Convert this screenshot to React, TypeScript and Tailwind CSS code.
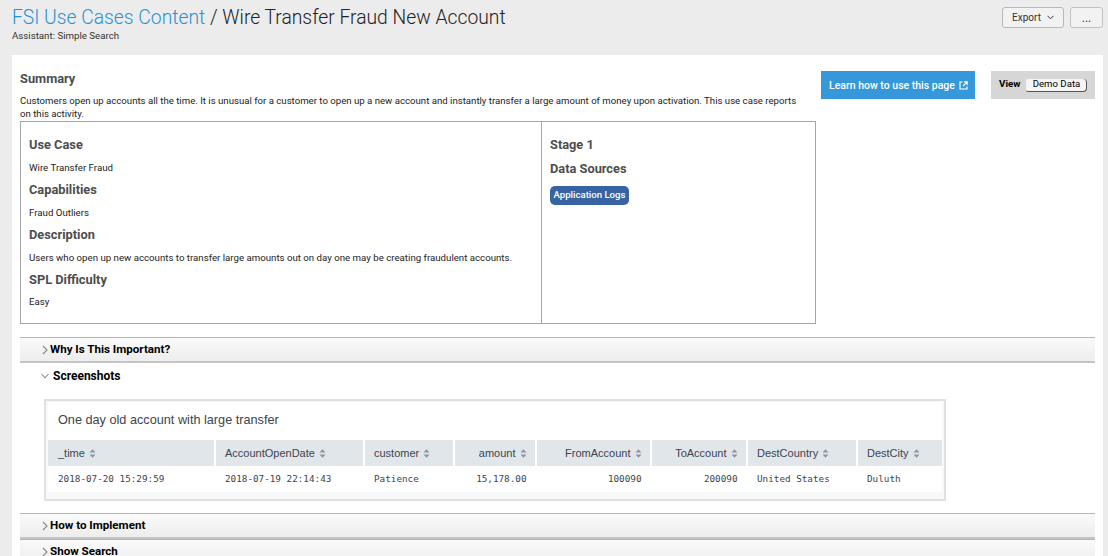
import React from "react";

const Sort = () => (
  <svg width="7" height="9" viewBox="0 0 7 9" className="ml-[4px] shrink-0" fill="#8d96a0">
    <path d="M3.5 0.3 L6.5 3.6 H0.5 Z" />
    <path d="M3.5 8.7 L6.5 5.4 H0.5 Z" />
  </svg>
);

const Chevron = ({ open }: { open?: boolean }) => (
  <svg width="8" height="10" viewBox="0 0 8 10" fill="none" stroke="#888" strokeWidth="1.1" className="shrink-0">
    {open ? <path d="M0.5 3 L4 6.8 L7.5 3" /> : <path d="M2 1 L6 5 L2 9" />}
  </svg>
);

const Bar = ({ title }: { title: string }) => (
  <div className="flex h-[26px] shrink-0 items-center gap-[1px] border-t border-t-[#b5b5b5] border-b-2 border-b-[#c4c4c4] bg-gradient-to-b from-[#fafafa] to-[#ededed] pl-[21px] text-[11.6px] font-bold text-black">
    <Chevron />
    <span>{title}</span>
  </div>
);

const columns: { label: string; w: string; right?: boolean; value: string }[] = [
  { label: "_time", w: "w-[168px]", value: "2018-07-20 15:29:59" },
  { label: "AccountOpenDate", w: "w-[149px]", value: "2018-07-19 22:14:43" },
  { label: "customer", w: "w-[90px]", value: "Patience" },
  { label: "amount", w: "w-[82px]", right: true, value: "15,178.00" },
  { label: "FromAccount", w: "w-[115px]", right: true, value: "100090" },
  { label: "ToAccount", w: "w-[96px]", right: true, value: "200090" },
  { label: "DestCountry", w: "w-[110px]", value: "United States" },
  { label: "DestCity", w: "w-[84px]", value: "Duluth" },
];

const H = ({ children, className = "" }: { children: React.ReactNode; className?: string }) => (
  <h3 className={`text-[12.8px] leading-[18px] font-bold text-[#4d4d4d] ${className}`}>{children}</h3>
);

export default function App() {
  return (
    <div className="h-[556px] w-[1108px] overflow-hidden bg-[#ececec] font-['Roboto',sans-serif] text-black">
      <header className="flex h-[55px] items-start justify-between pl-3 pr-[5px]">
        <div className="pt-[6px]">
          <h1 className="text-[19.3px] leading-6 font-light text-[#222]">
            <a className="text-[#2a91cf]">FSI Use Cases Content</a> / Wire Transfer Fraud New Account
          </h1>
          <p className="text-[9.7px] leading-[12px] text-[#333]">Assistant: Simple Search</p>
        </div>
        <div className="flex gap-[6px] pt-[7px]">
          <button className="flex h-[21px] w-[62px] items-center justify-center gap-[6px] rounded-[3px] border border-[#b8b8b8] bg-[#f2f2f2] text-[10px] text-[#333]">
            Export
            <svg width="7" height="5" viewBox="0 0 7 5" fill="none" stroke="#333" strokeWidth="1">
              <path d="M0.5 0.8 L3.5 3.8 L6.5 0.8" />
            </svg>
          </button>
          <button className="h-[21px] w-[33px] rounded-[3px] border border-[#c2c2c2] bg-[#f2f2f2] text-[12px] text-[#333]">...</button>
        </div>
      </header>

      <main className="ml-3 h-[501px] w-[1091px] bg-white pl-2 pt-4">
        <div className="flex items-start">
          <div className="w-[796px] shrink-0">
            <h2 className="text-[12.8px] leading-4 font-bold text-[#4d4d4d]">Summary</h2>
            <p className="mt-[7px] mb-[1px] pr-[8px] text-[9.65px] leading-[13px] text-[#222]">
              Customers open up accounts all the time. It is unusual for a customer to open up a new account and instantly transfer a large amount of money upon activation. This use case reports on this activity.
            </p>
            <div className="flex h-[203px] border border-[#a6a6a6]">
              <div className="w-[521px] border-r border-[#a6a6a6] pl-2 pt-[14px] text-[9.68px] text-[#222]">
                <H>Use Case</H>
                <p className="mt-[7px] leading-[13px]">Wire Transfer Fraud</p>
                <H className="mt-[7px]">Capabilities</H>
                <p className="mt-[7px] leading-[13px]">Fraud Outliers</p>
                <H className="mt-[7px]">Description</H>
                <p className="mt-[7px] leading-[13px]">Users who open up new accounts to transfer large amounts out on day one may be creating fraudulent accounts.</p>
                <H className="mt-[7px]">SPL Difficulty</H>
                <p className="mt-[6px] leading-[13px]">Easy</p>
              </div>
              <div className="pl-2 pt-[14px]">
                <H>Stage 1</H>
                <H className="mt-[6px]">Data Sources</H>
                <span className="mt-[8px] inline-block h-[19px] rounded-[5px] bg-[#3763a3] px-[3.5px] text-[9.6px] leading-[18px] font-medium text-white">Application Logs</span>
              </div>
            </div>
          </div>
          <a className="ml-[5px] flex h-[28px] w-[154px] shrink-0 items-center justify-center gap-[4px] bg-[#3498db] pl-[1px] pt-[1px] text-[10.5px] font-medium text-white">
            Learn how to use this page
            <svg width="9" height="9" viewBox="0 0 9 9" fill="none" stroke="white" strokeWidth="1.2" className="-mt-[1px]">
              <path d="M3.5 1 H1 V8 H8 V5.5" />
              <path d="M4 5 L8 1 M5 0.8 H8.2 V4" />
            </svg>
          </a>
          <div className="ml-4 flex h-[28px] w-[104px] shrink-0 items-center bg-[#d6d6d6] pl-2 text-[9.8px] text-black">
            <span className="-mt-[1px] font-bold">View</span>
            <span className="ml-[6px] flex h-[13px] w-[61px] items-center justify-center rounded-r-[4px] rounded-l-[2px] border-r border-b border-[#555] bg-[#f5f5f5] text-[9.6px]">Demo Data</span>
          </div>
        </div>

        <div className="mt-[13px] w-[1075px]">
          <Bar title="Why Is This Important?" />
          <div className="flex h-[25px] items-center gap-[4px] pl-[21px] text-[12px] font-bold text-black">
            <Chevron open />
            <span>Screenshots</span>
          </div>
          <div className="ml-[24px] mt-[11px] w-[902px] border-2 border-[#e0e0e0] bg-[#f7f8f8] px-[2px] pt-[1px] pb-[7px]">
            <div className="flex h-[38px] items-center bg-white pl-[10px] font-['Liberation_Sans',sans-serif] text-[12.7px] text-[#3c444d]">
              One day old account with large transfer
            </div>
            <div className="flex h-[26px] font-['Liberation_Sans',sans-serif] text-[11px] text-[#3c444d]">
              {columns.map((c) => (
                <div key={c.label} className={`${c.w} flex items-center border-r-2 border-white bg-[#e1e6eb] last:border-r-0 ${c.right ? "justify-end pr-[8.5px]" : "pl-[9px] first:pl-[10px]"}`}>
                  {c.label}
                  <Sort />
                </div>
              ))}
            </div>
            <div className="flex h-[26px] bg-white font-['DejaVu_Sans_Mono',monospace] text-[9.3px] text-[#3c444d]">
              {columns.map((c) => (
                <div key={c.label} className={`${c.w} flex items-center border-r-2 border-transparent last:border-r-0 ${c.right ? "justify-end pr-[8.5px]" : "pl-[9px] first:pl-[10px]"}`}>
                  {c.value}
                </div>
              ))}
            </div>
          </div>
          <div className="mt-3">
            <Bar title="How to Implement" />
            <Bar title="Show Search" />
          </div>
        </div>
      </main>
    </div>
  );
}
